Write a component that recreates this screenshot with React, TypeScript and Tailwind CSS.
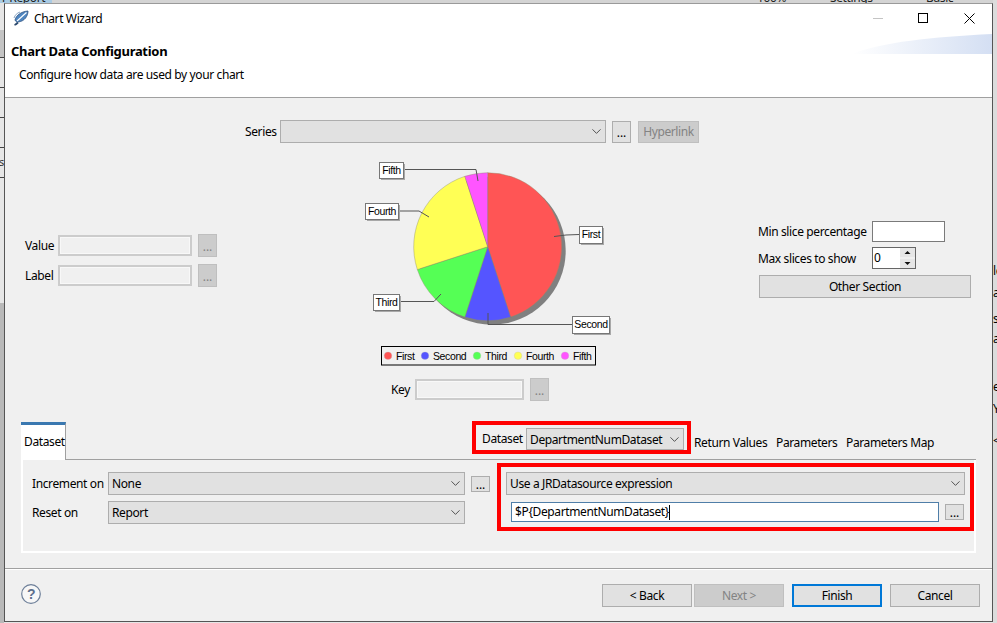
import { ChevronDown } from 'lucide-react';

const slices = [
  { name: 'First', share: 0.45, color: '#ff5555' },
  { name: 'Second', share: 0.1, color: '#5555ff' },
  { name: 'Third', share: 0.15, color: '#55ff55' },
  { name: 'Fourth', share: 0.25, color: '#ffff55' },
  { name: 'Fifth', share: 0.05, color: '#ff55ff' },
];

const callouts = [
  { name: 'Fifth', x: 379, y: 162, w: 24, h: 16, line: '403,169.5 476,169.5 478,181' },
  { name: 'Fourth', x: 365, y: 203, w: 33, h: 16, line: '398,211 419,211 429,217' },
  { name: 'First', x: 579, y: 226, w: 23, h: 17, line: '579,234.5 566,235 554,236.5' },
  { name: 'Third', x: 373, y: 294, w: 26, h: 16, line: '399,301.5 434,301.5 441,294' },
  { name: 'Second', x: 572, y: 316, w: 37, h: 17, line: '572,324.5 488,324.5 488,313' },
];

const legend = [
  { name: 'First', color: '#ff5555', dot: 388, text: 396 },
  { name: 'Second', color: '#5555ff', dot: 425, text: 433 },
  { name: 'Third', color: '#55ff55', dot: 477, text: 485 },
  { name: 'Fourth', color: '#ffff55', dot: 518, text: 526 },
  { name: 'Fifth', color: '#ff55ff', dot: 565, text: 573 },
];

const piePaths = () => {
  const cx = 487.7;
  const cy = 246.7;
  const r = 74;
  let start = 0;
  return slices.map((s) => {
    const end = start + s.share;
    const a0 = start * Math.PI * 2;
    const a1 = end * Math.PI * 2;
    const d = `M${cx} ${cy}L${cx + r * Math.sin(a0)} ${cy - r * Math.cos(a0)}A${r} ${r} 0 ${s.share > 0.5 ? 1 : 0} 1 ${cx + r * Math.sin(a1)} ${cy - r * Math.cos(a1)}Z`;
    start = end;
    return { ...s, d };
  });
};

const PieChart = () => (
  <svg width="280" height="225" viewBox="350 150 280 225" className="block">
    <circle cx="491.7" cy="250.7" r="74" fill="#808080" />
    {piePaths().map((s) => (
      <path key={s.name} d={s.d} fill={s.color} stroke="#8a8a6a" strokeWidth="0.4" />
    ))}
    {callouts.map((c) => (
      <g key={c.name}>
        <polyline points={c.line} fill="none" stroke="#555" strokeWidth="1" />
        <rect x={c.x + 2} y={c.y + 2} width={c.w} height={c.h} fill="#a8a8a8" />
        <rect x={c.x + 0.5} y={c.y + 0.5} width={c.w} height={c.h} fill="#fff" stroke="#777" />
        <text x={c.x + c.w / 2 + 0.5} y={c.y + 12} textAnchor="middle" fontSize="10.5" fontFamily="Liberation Sans, sans-serif" fill="#000">
          {c.name}
        </text>
      </g>
    ))}
    <rect x="381.5" y="346.5" width="214" height="18.5" fill="#f0f0f0" stroke="#000" />
    {legend.map((l) => (
      <g key={l.name}>
        <circle cx={l.dot} cy="355.7" r="3.8" fill={l.color} stroke="#bbb" strokeWidth="0.3" />
        <text x={l.text} y="359.5" fontSize="10.5" fontFamily="Liberation Sans, sans-serif" fill="#000">
          {l.name}
        </text>
      </g>
    ))}
  </svg>
);

const Select = ({ value, className }: { value?: string; className: string }) => (
  <div className={`flex items-center justify-between border border-[#adadad] bg-[#e1e1e1] pl-[3px] pr-[1px] ${className}`}>
    <span className="whitespace-nowrap pt-[1px]">{value}</span>
    <ChevronDown size={15} strokeWidth={1.2} className="shrink-0 text-[#222]" />
  </div>
);

const Dots = ({ disabled, className = 'h-[23px]' }: { disabled?: boolean; className?: string }) => (
  <div
    className={`flex w-[19px] shrink-0 items-center justify-center border pt-[2px] tracking-[0px] ${className} ${
      disabled ? 'border-[#bfbfbf] bg-[#cccccc] text-[#838383]' : 'border-[#adadad] bg-[#e1e1e1] text-black'
    }`}
  >
    ...
  </div>
);

const DisabledInput = ({ className }: { className: string }) => (
  <div className={`h-[21px] border-2 border-[#cccccc] bg-[#f0f0f0] shadow-[inset_0_0_0_1px_#f8f8f8] ${className}`} />
);

const WizardButton = ({ label, primary, disabled }: { label: string; primary?: boolean; disabled?: boolean }) => (
  <div
    className={`flex h-[23px] w-[90px] items-center justify-center pt-[1px] ${
      primary
        ? 'border-2 border-[#0078d7] bg-[#e1e1e1]'
        : disabled
          ? 'border border-[#bfbfbf] bg-[#cccccc] text-[#838383]'
          : 'border border-[#adadad] bg-[#e1e1e1]'
    }`}
  >
    {label}
  </div>
);

const App = () => {
  return (
    <div className="relative h-[623px] w-[997px] overflow-hidden bg-[#e6e6e6] font-['Noto_Sans','Open_Sans',sans-serif] text-[12px] leading-none tracking-[-0.38px] text-black">
      {/* what shows behind the dialog */}
      <div className="absolute left-0 top-0 h-[3px] w-[52px] bg-[#a9cbe4]" />
      <div className="absolute left-[52px] top-0 h-[3px] w-[945px] bg-[#d4d4d4]" />
      <span className="absolute left-[2px] top-[-8px] text-[#222]">r Report</span>
      <span className="absolute left-[757px] top-[-8px] text-[#222]">100%</span>
      <span className="absolute left-[830px] top-[-8px] text-[#222]">Settings</span>
      <span className="absolute left-[926px] top-[-8px] text-[#222]">Basic Element</span>
      <div className="absolute left-0 top-[30px] h-[28px] w-[4px] bg-[#c4c4c4]" />
      <div className="absolute left-0 top-[57px] h-px w-[4px] bg-[#444]" />
      <div className="absolute left-0 top-[87px] h-px w-[4px] bg-[#444]" />
      <div className="absolute left-0 top-[117px] h-px w-[4px] bg-[#444]" />
      <div className="absolute left-0 top-[147px] h-px w-[4px] bg-[#444]" />
      <div className="absolute left-0 top-[177px] h-px w-[4px] bg-[#444]" />
      <div className="absolute left-0 top-[303px] h-[320px] w-[4px] bg-[#b9b9b9]" />
      <div className="absolute left-[993px] top-0 h-[623px] w-[4px] bg-[#dcdcdc]" />
      <span className="absolute left-[-1px] top-[156px] text-[11px] text-[#333]">s</span>
      <span className="absolute left-[993px] top-[265px]">le</span>
      <span className="absolute left-[993px] top-[287px]">ab</span>
      <span className="absolute left-[993px] top-[313px]">s</span>
      <span className="absolute left-[993px] top-[333px]">at</span>
      <span className="absolute left-[993px] top-[381px]">e</span>
      <span className="absolute left-[993px] top-[403px]">Y</span>
      <span className="absolute left-[993px] top-[435px]">&lt;</span>

      <div className="absolute left-[4px] top-[3px] flex h-[619px] w-[989px] flex-col border border-[#555555] border-t-[#9a9a9a] bg-[#f0f0f0]">
        {/* header */}
        <div className="relative h-[94px] shrink-0 overflow-hidden border-b border-[#a0a0a0] bg-white">
          <svg width="16" height="16" viewBox="0 0 16 16" className="absolute left-[8px] top-[6px]">
            <path d="M1.5 15C3 14.5 4 13.5 5 12.5" stroke="#2d4a6e" strokeWidth="1.8" fill="none" />
            <path d="M2 10C3 5.5 8 1.5 15 1C15 6 11.5 11.5 5 12C3.5 12 2.5 11.5 2 10Z" fill="#4f86c0" stroke="#2f5280" strokeWidth="0.8" />
            <path d="M4 11C7 8.5 10 5.5 13.5 2.5" stroke="#ffffff" strokeWidth="1.1" fill="none" />
            <path d="M1 8C2 5 4 3 7 2" stroke="#8aa6c4" strokeWidth="1" fill="none" />
          </svg>
          <span className="absolute left-[29px] top-[9px]">Chart Wizard</span>
          <div className="absolute left-[868px] top-[14px] h-px w-[10px] bg-[#c4c4c4]" />
          <div className="absolute left-[913px] top-[9px] h-[10px] w-[10px] border border-black" />
          <svg width="11" height="11" viewBox="0 0 11 11" className="absolute left-[959px] top-[9px]">
            <path d="M0.5 0.5L10.5 10.5M10.5 0.5L0.5 10.5" stroke="#000" strokeWidth="1" />
          </svg>
          <svg width="140" height="20" viewBox="0 0 140 20" className="absolute left-[847px] top-[30px]">
            <defs>
              <linearGradient id="swoosh" x1="0" x2="1" y1="0" y2="0">
                <stop offset="0" stopColor="#ffffff" />
                <stop offset="1" stopColor="#d4dff3" />
              </linearGradient>
            </defs>
            <path d="M0 20C30 8 80 3 140 0V20Z" fill="url(#swoosh)" />
          </svg>
          <div className="pl-[6px] pt-[40px] text-[13px] font-bold leading-[14px] tracking-[-0.3px]">Chart Data Configuration</div>
          <div className="pl-[14px] pt-[10px] leading-[14px]">Configure how data are used by your chart</div>
        </div>

        {/* chart area */}
        <div className="flex pt-[22px]">
          <div className="w-[235px] shrink-0 pl-[20px] pt-[114px]">
            <div className="flex h-[23px] items-center">
              <span className="w-[33px] pt-[1px]">Value</span>
              <DisabledInput className="w-[134px]" />
              <Dots disabled className="ml-[6px] h-[23px]" />
            </div>
            <div className="mt-[7px] flex h-[23px] items-center">
              <span className="w-[33px] pt-[1px]">Label</span>
              <DisabledInput className="w-[134px]" />
              <Dots disabled className="ml-[6px] h-[23px]" />
            </div>
          </div>

          <div className="w-[480px] shrink-0">
            <div className="flex items-center">
              <span className="ml-[5px] w-[35px]">Series</span>
              <Select className="h-[23px] w-[326px]" />
              <Dots className="ml-[6px] h-[22px]" />
              <div className="ml-[7px] flex h-[22px] w-[61px] items-center justify-center border border-[#bfbfbf] bg-[#cccccc] text-[#838383]">
                Hyperlink
              </div>
            </div>
            <div className="ml-[110px] mt-[7px]">
              <PieChart />
            </div>
            <div className="mt-[3px] flex items-center">
              <span className="ml-[151px] w-[24px] pt-[1px]">Key</span>
              <DisabledInput className="w-[109px]" />
              <Dots disabled className="ml-[6px] h-[23px]" />
            </div>
          </div>

          <div className="pl-[38px] pt-[101px]">
            <div className="flex h-[21px] items-center">
              <span className="w-[114px] pt-[1px]">Min slice percentage</span>
              <div className="h-[21px] w-[73px] border border-[#7a7a7a] bg-white" />
            </div>
            <div className="mt-[5px] flex h-[22px] items-center">
              <span className="w-[114px] pt-[1px]">Max slices to show</span>
              <div className="flex h-[22px] w-[44px] items-center justify-between border border-[#666666] bg-white pl-[1px]">
                <span>0</span>
                <div className="flex h-full w-[15px] flex-col justify-between bg-[#f0f0f0] text-[#222]">
                  <svg width="15" height="9" viewBox="0 0 15 9" className="bg-[#e6e6e6]">
                    <path d="M4.5 6L7.5 3L10.5 6Z" fill="#111" />
                  </svg>
                  <svg width="15" height="9" viewBox="0 0 15 9" className="bg-[#e6e6e6]">
                    <path d="M4.5 3L7.5 6L10.5 3Z" fill="#111" />
                  </svg>
                </div>
              </div>
            </div>
            <div className="ml-[1px] mt-[6px] flex h-[23px] w-[212px] items-center justify-center border border-[#adadad] bg-[#e1e1e1] pt-[1px]">
              Other Section
            </div>
          </div>
        </div>

        {/* tab strip */}
        <div className="mx-[16px] mt-[21px] flex h-[38px] border-b border-[#a0a0a0]">
          <div className="h-[38px] w-[45px] border-r border-t-[3px] border-[#a0a0a0] border-t-[#3a78b0] bg-white pl-[3px] pt-[11px]">
            Dataset
          </div>
          <div className="-mt-[1px] ml-[406px] flex h-[33px] w-[219px] items-end border-4 border-[#ff0000] pl-[6px]">
            <span className="w-[44px] pb-[5px]">Dataset</span>
            <Select value="DepartmentNumDataset" className="h-[22px] w-[158px]" />
          </div>
          <div className="ml-[3px] flex h-[33px] items-center pt-[9px]">
            <span className="w-[82px]">Return Values</span>
            <span className="w-[70px]">Parameters</span>
            <span>Parameters Map</span>
          </div>
        </div>

        <div className="mx-[16px] flex h-[93px] border-2 border-t-0 border-white pl-[9px]">
          <div className="pt-[12px]">
            <div className="flex items-center">
              <span className="w-[76px] pt-[1px]">Increment on</span>
              <Select value="None" className="h-[23px] w-[357px]" />
              <Dots className="ml-[6px]" />
            </div>
            <div className="mt-[6px] flex items-center">
              <span className="w-[76px] pt-[1px]">Reset on</span>
              <Select value="Report" className="h-[23px] w-[357px]" />
            </div>
          </div>
          <div className="ml-[7px] mt-[3px] h-[68px] w-[478px] border-4 border-[#ff0000] pl-[5px] pt-[5px]">
            <Select value="Use a JRDatasource expression" className="h-[23px] w-[459px]" />
            <div className="mt-[7px] flex items-center pl-[5px]">
              <div className="flex h-[20px] w-[428px] items-center border border-[#4f7ea8] bg-white pl-[3px]">
                <span>$P{'{'}DepartmentNumDataset{'}'}</span>
                <span className="h-[15px] w-px bg-black" />
              </div>
              <Dots className="ml-[6px]" />
            </div>
          </div>
        </div>

        {/* footer */}
        <div className="mt-[15px] flex flex-1 items-start border-t border-[#a0a0a0] pl-[16px] pt-[15px] shadow-[inset_0_1px_0_#ffffff]">
          <svg width="20" height="20" viewBox="0 0 20 20" className="shrink-0">
            <circle cx="10" cy="10" r="9.3" fill="#f7f7f7" stroke="#6d7f99" strokeWidth="1.2" />
            <text x="10" y="15" textAnchor="middle" fontSize="14" fontWeight="700" fontFamily="Liberation Sans, sans-serif" fill="#5d6f8c">
              ?
            </text>
          </svg>
          <div className="ml-[561px] flex">
            <WizardButton label="< Back" />
            <div className="ml-[2px]">
              <WizardButton label="Next >" disabled />
            </div>
            <div className="ml-[8px]">
              <WizardButton label="Finish" primary />
            </div>
            <div className="ml-[8px]">
              <WizardButton label="Cancel" />
            </div>
          </div>
        </div>
      </div>
    </div>
  );
};

export default App;
